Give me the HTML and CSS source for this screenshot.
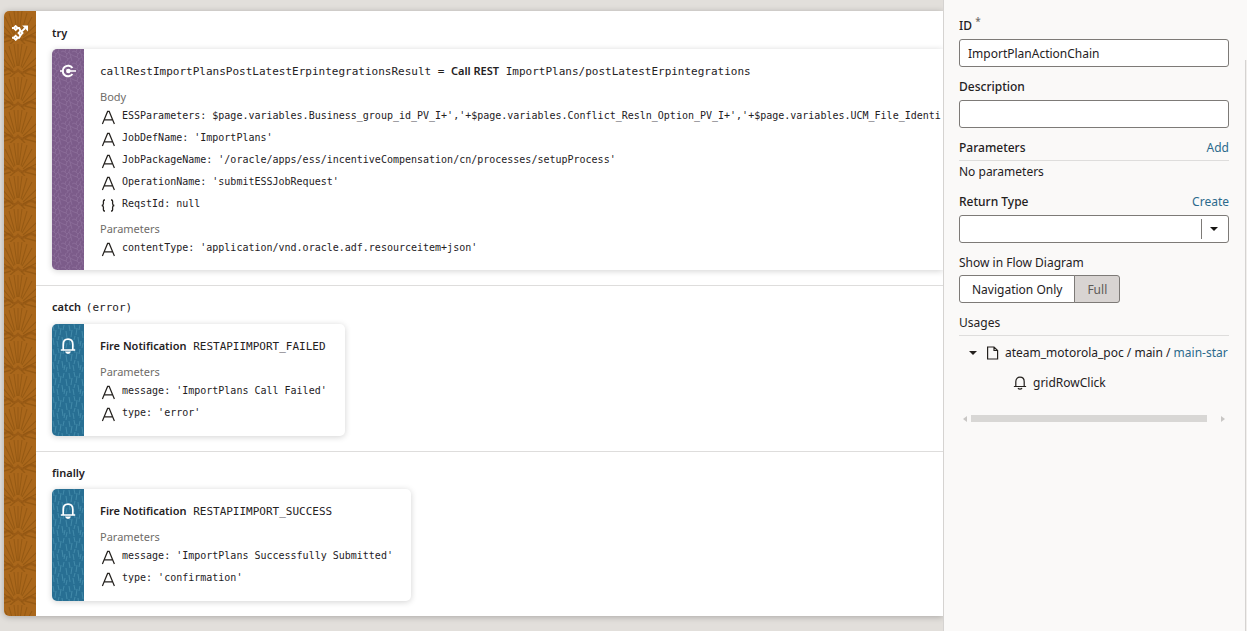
FILE: index.html
```html
<!DOCTYPE html>
<html lang="en">
<head>
    <meta charset="UTF-8">
    <meta name="viewport" content="width=device-width, initial-scale=1.0">
    <title>ImportPlanActionChain</title>
    <link rel="stylesheet" href="styles.css">
</head>
<body>
    <!-- Shared icons -->
    <svg class="icon-defs" aria-hidden="true">
        <symbol id="icon-text" viewBox="0 0 16 16">
            <path d="M2.4 15 L7.6 2.4 H9.2 L14.4 15 M4.4 10.8 H12.4" fill="none" stroke="currentColor" stroke-width="1.2"/>
        </symbol>
        <symbol id="icon-object" viewBox="0 0 16 16">
            <path d="M5 3 H4.4 Q3.4 3 3.4 4.2 V6.8 Q3.4 8.2 1.8 8.5 Q3.4 8.8 3.4 10.2 V12.8 Q3.4 14 4.4 14 H5 M11 3 H11.6 Q12.6 3 12.6 4.2 V6.8 Q12.6 8.2 14.2 8.5 Q12.6 8.8 12.6 10.2 V12.8 Q12.6 14 11.6 14 H11" fill="none" stroke="currentColor" stroke-width="1.3"/>
        </symbol>
        <symbol id="icon-bell" viewBox="0 0 16 16">
            <path d="M.8 12 H15.2 M3.2 12 V6.5 C3.2 3 5.2 1.2 8 1.2 S12.8 3 12.8 6.5 V12" fill="none" stroke="currentColor" stroke-width="1.7"/>
            <path d="M5 13.6 H11 Q10.4 16 8 16 Q5.6 16 5 13.6 Z" fill="currentColor"/>
        </symbol>
        <symbol id="icon-bell-outline" viewBox="0 0 16 16">
            <path d="M1 12 H15 M3.2 12 V6.5 C3.2 3.2 5.2 1.4 8 1.4 S12.8 3.2 12.8 6.5 V12" fill="none" stroke="currentColor" stroke-width="1.4"/>
            <path d="M5.6 14 Q8 16 10.4 14" fill="none" stroke="currentColor" stroke-width="1.4"/>
        </symbol>
    </svg>

    <div class="workspace">
        <main class="canvas">
            <div class="chain">
                <div class="strip strip-chain">
                    <svg class="strip-icon" viewBox="0 0 18 18">
                        <g fill="none" stroke="currentColor" stroke-width="2.2">
                            <path d="M4.2 1.2 L6.4 3.4 L4.2 5.6 L2 3.4 Z"/>
                            <path d="M9.6 6.6 L11.8 9 L9.6 11.4 L7.4 9 Z"/>
                            <path d="M4.2 12.2 L6.4 14.4 L4.2 16.6 L2 14.4 Z"/>
                            <path d="M0 3.4 H2 M0 14.4 H2 M6.4 3.4 H8 L9.6 6.6 M9.6 11.4 L8 14.4 H6.4 M11 7.2 L14.6 3.6"/>
                        </g>
                        <path d="M11.4 .6 H18 V7.2 Z" fill="currentColor"/>
                    </svg>
                </div>
                <div class="sections">
                    <section class="section">
                        <h2 class="section-title">try</h2>
                        <article class="card card-wide">
                            <div class="strip strip-rest">
                                <svg class="strip-icon" viewBox="0 0 18 18">
                                    <path d="M14 5.6 A6 6 0 1 0 14 12.4" fill="none" stroke="currentColor" stroke-width="2.2"/>
                                    <path d="M0 9 H4 M9 9 H18" stroke="currentColor" stroke-width="1.8"/>
                                    <circle cx="9.4" cy="9" r="2.6" fill="currentColor"/>
                                </svg>
                            </div>
                            <div class="card-body">
                                <h3 class="card-title"><code>callRestImportPlansPostLatestErpintegrationsResult = </code>Call REST<code> ImportPlans/postLatestErpintegrations</code></h3>
                                <div class="group">
                                    <h4 class="group-title">Body</h4>
                                    <ul class="params">
                                        <li><svg class="param-icon"><use href="#icon-text"/></svg><code>ESSParameters: $page.variables.Business_group_id_PV_I+','+$page.variables.Conflict_Resln_Option_PV_I+','+$page.variables.UCM_File_Identi</code></li>
                                        <li><svg class="param-icon"><use href="#icon-text"/></svg><code>JobDefName: 'ImportPlans'</code></li>
                                        <li><svg class="param-icon"><use href="#icon-text"/></svg><code>JobPackageName: '/oracle/apps/ess/incentiveCompensation/cn/processes/setupProcess'</code></li>
                                        <li><svg class="param-icon"><use href="#icon-text"/></svg><code>OperationName: 'submitESSJobRequest'</code></li>
                                        <li><svg class="param-icon"><use href="#icon-object"/></svg><code>ReqstId: null</code></li>
                                    </ul>
                                </div>
                                <div class="group">
                                    <h4 class="group-title">Parameters</h4>
                                    <ul class="params">
                                        <li><svg class="param-icon"><use href="#icon-text"/></svg><code>contentType: 'application/vnd.oracle.adf.resourceitem+json'</code></li>
                                    </ul>
                                </div>
                            </div>
                        </article>
                    </section>

                    <section class="section">
                        <h2 class="section-title">catch <code>(error)</code></h2>
                        <article class="card">
                            <div class="strip strip-notify">
                                <svg class="strip-icon"><use href="#icon-bell"/></svg>
                            </div>
                            <div class="card-body">
                                <h3 class="card-title">Fire Notification<code> RESTAPIIMPORT_FAILED</code></h3>
                                <div class="group">
                                    <h4 class="group-title">Parameters</h4>
                                    <ul class="params">
                                        <li><svg class="param-icon"><use href="#icon-text"/></svg><code>message: 'ImportPlans Call Failed'</code></li>
                                        <li><svg class="param-icon"><use href="#icon-text"/></svg><code>type: 'error'</code></li>
                                    </ul>
                                </div>
                            </div>
                        </article>
                    </section>

                    <section class="section">
                        <h2 class="section-title">finally</h2>
                        <article class="card">
                            <div class="strip strip-notify">
                                <svg class="strip-icon"><use href="#icon-bell"/></svg>
                            </div>
                            <div class="card-body">
                                <h3 class="card-title">Fire Notification<code> RESTAPIIMPORT_SUCCESS</code></h3>
                                <div class="group">
                                    <h4 class="group-title">Parameters</h4>
                                    <ul class="params">
                                        <li><svg class="param-icon"><use href="#icon-text"/></svg><code>message: 'ImportPlans Successfully Submitted'</code></li>
                                        <li><svg class="param-icon"><use href="#icon-text"/></svg><code>type: 'confirmation'</code></li>
                                    </ul>
                                </div>
                            </div>
                        </article>
                    </section>
                </div>
            </div>
        </main>

        <aside class="properties">
            <div class="properties-content">
                <div class="field">
                    <label class="label" for="chainId">ID <sup class="required">*</sup></label>
                    <input class="input" type="text" id="chainId" value="ImportPlanActionChain">
                </div>
                <div class="field">
                    <label class="label" for="description">Description</label>
                    <input class="input" type="text" id="description">
                </div>
                <div class="field">
                    <div class="label-row label-row-ruled">
                        <h2 class="label">Parameters</h2>
                        <a class="link" href="#">Add</a>
                    </div>
                    <p class="empty">No parameters</p>
                </div>
                <div class="field">
                    <div class="label-row">
                        <label class="label" for="returnType">Return Type</label>
                        <a class="link" href="#">Create</a>
                    </div>
                    <select class="input select" id="returnType">
                        <option></option>
                    </select>
                </div>
                <div class="field">
                    <div class="label label-light" id="flowLabel">Show in Flow Diagram</div>
                    <div class="toggle" role="group" aria-labelledby="flowLabel">
                        <button type="button" class="toggle-button">Navigation Only</button>
                        <button type="button" class="toggle-button selected" aria-pressed="true">Full</button>
                    </div>
                </div>
                <div class="field">
                    <div class="label-row label-row-ruled">
                        <h2 class="label label-light">Usages</h2>
                    </div>
                    <ul class="tree">
                        <li class="tree-item">
                            <svg class="tree-arrow" viewBox="0 0 8 4"><path d="M0 0 H8 L4 4 Z" fill="currentColor"/></svg>
                            <svg class="tree-icon" viewBox="0 0 14 14"><path d="M2.6 1 H9 L12.6 4.5 V13 H2.6 Z M9 1 V4.5 H12.6" fill="none" stroke="currentColor" stroke-width="1.2"/></svg>
                            <span>ateam_motorola_poc / main / <a class="link" href="#">main-star</a></span>
                        </li>
                        <li class="tree-item tree-child">
                            <svg class="tree-icon"><use href="#icon-bell-outline"/></svg>
                            <span>gridRowClick</span>
                        </li>
                    </ul>
                    <div class="scroller">
                        <svg class="scroller-arrow" viewBox="0 0 4 6"><path d="M4 0 V6 L0 3 Z" fill="currentColor"/></svg>
                        <div class="scroller-track"><div class="scroller-thumb"></div></div>
                        <svg class="scroller-arrow" viewBox="0 0 4 6"><path d="M0 0 V6 L4 3 Z" fill="currentColor"/></svg>
                    </div>
                </div>
            </div>
            <div class="properties-edge"></div>
        </aside>
    </div>
</body>
</html>
```

FILE: styles.css
```css
* {
    box-sizing: border-box;
}
body {
    margin: 0;
    font-family: "Noto Sans", "Open Sans", sans-serif;
    font-size: 12px;
    color: #24211e;
    background: #e2dfdb;
}
h2, h3, h4, p, ul {
    margin: 0;
    padding: 0;
}
ul {
    list-style: none;
}
code {
    font-family: "DejaVu Sans Mono", monospace;
    font-size: 11px;
    font-weight: normal;
    white-space: pre;
}
.icon-defs {
    display: none;
}
.workspace {
    display: flex;
    min-height: 100vh;
}

/* Flow canvas */
.canvas {
    flex: 1;
    min-width: 0;
    overflow: hidden;
    padding: 11px 0 13px 4px;
}
.chain {
    display: flex;
    background: #fff;
    border-radius: 5px 0 0 5px;
    box-shadow: 0 1px 6px rgba(0, 0, 0, 0.25);
}
.strip {
    flex: none;
    width: 32px;
    padding-top: 14px;
    border-radius: 5px 0 0 5px;
    text-align: center;
    color: #fff;
}
.strip-icon {
    width: 16px;
    height: 16px;
}
/* Fans */
.strip-chain {
    background: #aa671b url("data:image/svg+xml,%3Csvg xmlns='http://www.w3.org/2000/svg' width='32' height='33'%3E%3Cg fill='none' stroke='%238f5410'%3E%3Cpath d='M9 28L-3 20M9 26L-2 13M10 24L1 6M11 23L5 2M13 22L10 0M14 22V-1M15 22L18 0M17 23L23 2M18 24L28 6M19 26L33 13M19 28L34 20' stroke-width='1.1' stroke-opacity='.7'/%3E%3Cpath d='M0 27Q4 23 8 27Q11 30 14 26Q18 31 22 27Q27 23 32 27' stroke-width='2.5' stroke-opacity='.6'/%3E%3Cpath d='M0 31L7 29M6 33L11 29M17 29L21 33M21 29L32 32' stroke-width='1.5' stroke-opacity='.7'/%3E%3C/g%3E%3C/svg%3E");
}
/* Pebbles */
.strip-rest {
    background: #7c5c8a url("data:image/svg+xml,%3Csvg xmlns='http://www.w3.org/2000/svg' width='11' height='12'%3E%3Cpath d='M0 2L2 3L3 0M2 3L4 5L6 3L7 0M4 5L3 8L0 7M3 8L5 10L8 8L7 5L6 3M7 5L11 7M8 8L9 12M5 10L4 12M9 3L11 2' fill='none' stroke='%238d6e9a' stroke-width='.8'/%3E%3C/svg%3E");
}
/* Rain */
.strip-notify {
    background: #286f93 url("data:image/svg+xml,%3Csvg xmlns='http://www.w3.org/2000/svg' width='16' height='24'%3E%3Cpath d='M1 1L2 7M4 6L3 13M6 0L7 5M9 4L8 11M12 1L11 6M14 7L15 14M1 14L2 21M5 17L6 23M7 12L6 16M10 13L11 20M13 17L12 22M15 19L14 24' fill='none' stroke='%234189a9' stroke-width='1'/%3E%3C/svg%3E");
}
.sections {
    flex: 1;
    min-width: 0;
}
.section {
    padding: 12px 0 15px 16px;
}
.section + .section {
    padding-top: 11px;
    border-top: 1px solid #dedddc;
}
.section-title {
    margin-bottom: 6px;
    font-size: 11px;
    font-weight: 600;
    line-height: 20px;
}
.section-title code {
    padding-left: 2px;
}
.card {
    display: flex;
    width: fit-content;
    min-height: 112px;
    border-radius: 5px;
    background: #fff;
    box-shadow: 0 1px 6px rgba(0, 0, 0, 0.18);
}
.card-wide {
    width: auto;
    border-radius: 5px 0 0 5px;
}
.card-body {
    flex: 1;
    min-width: 0;
    overflow: hidden;
    padding: 12px 18px 11px 16px;
}
.card-wide .card-body {
    padding-right: 0;
}
.card-title {
    margin-bottom: 6px;
    font-size: 11px;
    font-weight: 600;
    line-height: 20px;
    white-space: nowrap;
}
.group + .group {
    margin-top: 5px;
}
.group-title {
    font-size: 11px;
    font-weight: normal;
    line-height: 17px;
    color: #6f6c69;
}
.params li {
    display: flex;
    gap: 6px;
    line-height: 22px;
}
.params code {
    font-size: 10px;
}
.param-icon {
    flex: none;
    width: 16px;
    height: 16px;
    margin-top: 4px;
}

/* Property panel */
.properties {
    display: flex;
    flex: none;
    width: 304px;
    border-left: 1px solid #d5d3d1;
    background: #faf9f8;
}
.properties-content {
    flex: 1;
    min-width: 0;
    padding: 16px 16px 0 15px;
}
.properties-edge {
    width: 2px;
    margin-top: 60px;
    border-left: 1px solid #d5d3d1;
    background: #f1efed;
}
.field {
    margin-bottom: 10px;
}
.label {
    display: block;
    font-size: 12px;
    font-weight: 500;
    line-height: 20px;
}
.label-light {
    font-weight: normal;
}
.required {
    font-size: 10px;
    line-height: 1;
    color: #6f6c69;
}
.input {
    display: block;
    width: 100%;
    height: 28px;
    margin-top: 3px;
    padding: 0 8px;
    border: 1px solid #7d7a77;
    border-radius: 3px;
    background: #fff;
    color: #24211e;
    font: inherit;
}
.select {
    appearance: none;
    background: #fff url("data:image/svg+xml,%3Csvg xmlns='http://www.w3.org/2000/svg' width='27' height='26'%3E%3Cpath d='M.5 3V23' stroke='%237d7a77'/%3E%3Cpath d='M9 11h8l-4 4z' fill='%23161513'/%3E%3C/svg%3E") right center no-repeat;
}
.label-row {
    display: flex;
    justify-content: space-between;
    line-height: 20px;
}
.label-row-ruled {
    padding-bottom: 2px;
    border-bottom: 1px solid #dedddc;
}
.link {
    color: #2c6a8c;
    text-decoration: none;
}
.empty {
    line-height: 21px;
}
.toggle {
    display: flex;
    width: fit-content;
    margin-top: 2px;
}
.toggle-button {
    height: 28px;
    padding: 0 12px;
    border: 1px solid #7d7a77;
    border-radius: 3px 0 0 3px;
    background: #fff;
    color: #24211e;
    font: inherit;
}
.toggle-button.selected {
    margin-left: -1px;
    border-radius: 0 3px 3px 0;
    background: #d8d4d2;
    color: #5d5a57;
}
.tree {
    overflow: hidden;
    padding: 2px 0 0 10px;
}
.tree-item {
    display: flex;
    align-items: center;
    gap: 6px;
    line-height: 30px;
    white-space: nowrap;
}
.tree-child {
    padding-left: 44px;
}
.tree-arrow {
    flex: none;
    width: 8px;
    height: 4px;
    margin-right: 2px;
}
.tree-icon {
    flex: none;
    width: 14px;
    height: 14px;
}
.scroller {
    display: flex;
    align-items: center;
    gap: 4px;
    padding: 17px 4px 0;
    color: #c9c7c5;
}
.scroller-arrow {
    flex: none;
    width: 4px;
    height: 6px;
}
.scroller-track {
    flex: 1;
}
.scroller-thumb {
    width: 96%;
    height: 7px;
    background: #d8d7d5;
}
```
